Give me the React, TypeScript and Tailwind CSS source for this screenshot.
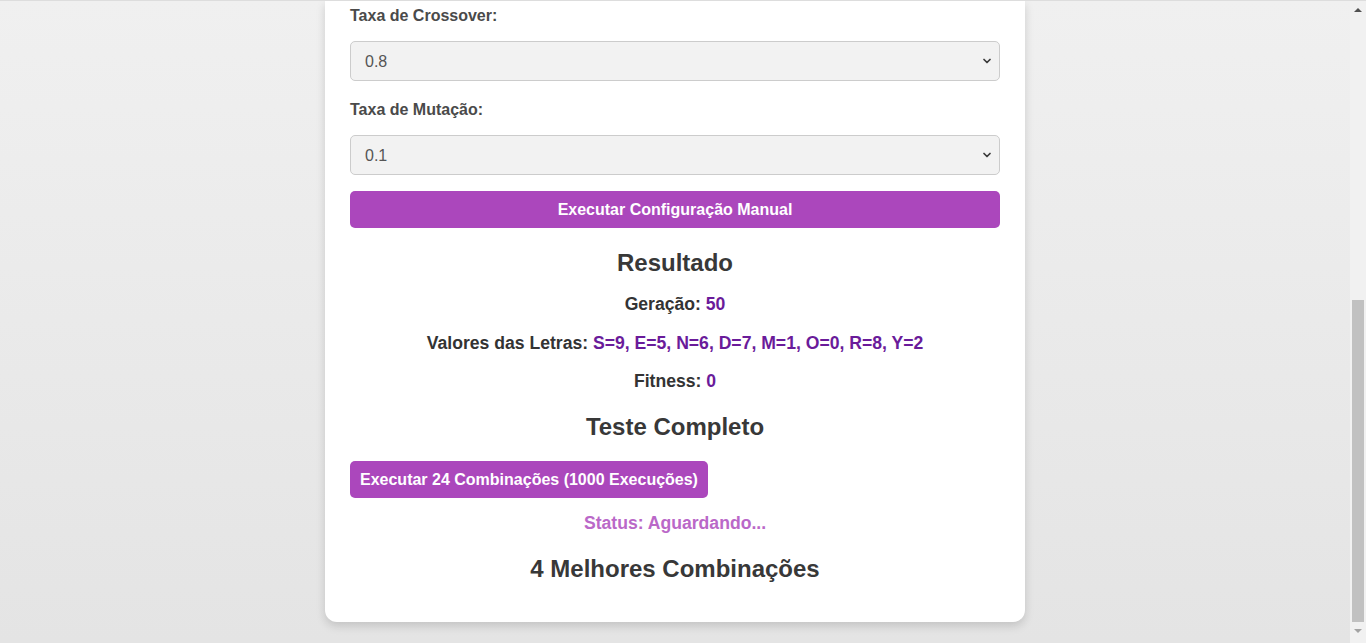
import { ChevronDown } from 'lucide-react';

const font = { fontFamily: '"Liberation Sans", Arial, sans-serif' };

function Field({ label, value, first }: { label: string; value: string; first?: boolean }) {
  return (
    <>
      <label className={`block text-[16px] font-bold leading-[20px] text-[#4a4a4a] ${first ? '' : 'mt-[19px]'}`}>
        {label}
      </label>
      <div className="relative mt-[15px] h-[40px]">
        <select
          defaultValue={value}
          className="w-full h-full appearance-none rounded-[5px] border border-[#cccccc] bg-[#f2f2f2] pl-[14px] pt-[1px] text-[16px] text-[#555555] outline-none"
        >
          <option value={value}>{value}</option>
        </select>
        <ChevronDown
          size={12}
          strokeWidth={3.5}
          className="pointer-events-none absolute right-[7px] top-[14px] text-[#3a3a3a]"
        />
      </div>
    </>
  );
}

function Scrollbar() {
  return (
    <div className="w-[16px] h-full bg-[#f1f1f1] flex flex-col items-center">
      <div className="mt-[7px] w-0 h-0 border-x-[4px] border-x-transparent border-b-[4px] border-b-[#505050]" />
      <div className="mt-[288px] w-[12px] h-[322px] bg-[#c1c1c1]" />
      <div className="mt-[7px] w-0 h-0 border-x-[4px] border-x-transparent border-t-[4px] border-t-[#a3a3a3]" />
    </div>
  );
}

export default function App() {
  const letters = 'S=9, E=5, N=6, D=7, M=1, O=0, R=8, Y=2';

  return (
    <div style={font} className="h-[643px] flex overflow-hidden border-t border-[#dddddd]">
      <main className="flex-1 bg-gradient-to-b from-[#f0f0f0] to-[#e4e4e4]">
        <div className="mx-auto w-[700px] bg-white rounded-b-[12px] shadow-[0_4px_10px_rgba(0,0,0,0.15)] px-[25px] pt-[5px] pb-[39px]">
          <Field label="Taxa de Crossover:" value="0.8" first />
          <Field label="Taxa de Mutação:" value="0.1" />

          <button className="mt-[16px] w-full h-[37px] rounded-[5px] bg-[#ab47bc] text-white text-[16px] font-bold">
            Executar Configuração Manual
          </button>

          <h2 className="mt-[21px] text-center text-[24px] leading-[28px] font-bold text-[#383838]">Resultado</h2>

          <p className="mt-[17px] text-center text-[17.6px] leading-[20px] font-bold text-[#333333]">
            Geração: <span className="text-[#6a1b9a]">50</span>
          </p>
          <p className="mt-[19px] text-center text-[17.6px] leading-[20px] font-bold text-[#333333]">
            Valores das Letras: <span className="text-[#6a1b9a]">{letters}</span>
          </p>
          <p className="mt-[18px] text-center text-[17.6px] leading-[20px] font-bold text-[#333333]">
            Fitness: <span className="text-[#6a1b9a]">0</span>
          </p>

          <h2 className="mt-[22px] text-center text-[24px] leading-[28px] font-bold text-[#383838]">Teste Completo</h2>

          <button className="mt-[20px] h-[37px] px-[10px] rounded-[5px] bg-[#ab47bc] text-white text-[16px] font-bold">
            Executar 24 Combinações (1000 Execuções)
          </button>

          <p className="mt-[15px] text-center text-[17.6px] leading-[20px] font-bold text-[#ba68c8]">
            Status: Aguardando...
          </p>

          <h2 className="mt-[22px] text-center text-[24px] leading-[28px] font-bold text-[#383838]">
            4 Melhores Combinações
          </h2>
        </div>
      </main>
      <Scrollbar />
    </div>
  );
}
